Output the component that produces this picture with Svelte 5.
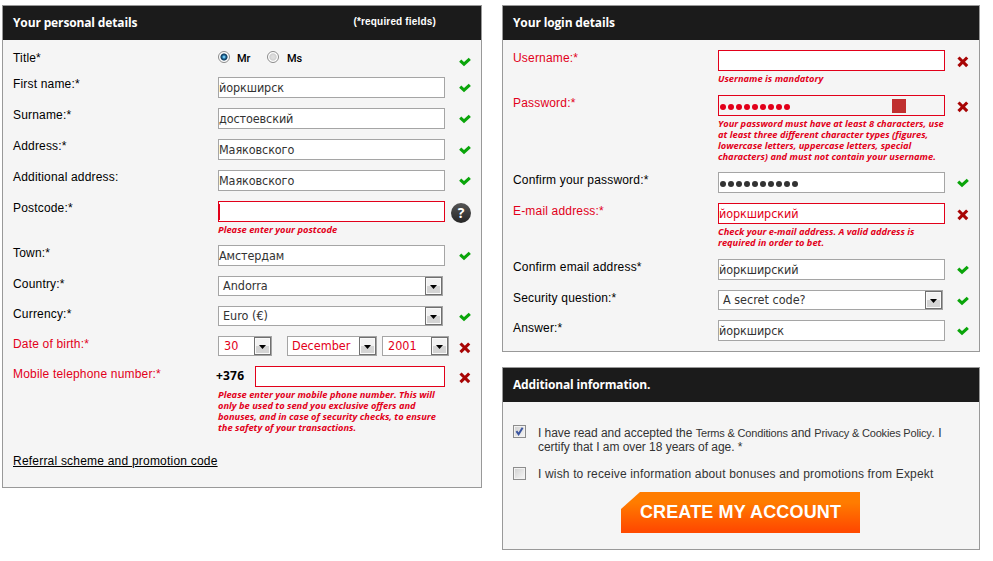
<script>
  const personal = [
    { label: 'First name:*', value: 'йоркширск', state: 'ok', h: 31 },
    { label: 'Surname:*', value: 'достоевский', state: 'ok', h: 31 },
    { label: 'Address:*', value: 'Маяковского', state: 'ok', h: 31 },
    { label: 'Additional address:', value: 'Маяковского', state: 'ok', h: 31 },
    { label: 'Postcode:*', value: '', state: 'help', red: true, caret: true, h: 44, lines: ['Please enter your postcode'] },
    { label: 'Town:*', value: 'Амстердам', state: 'ok', h: 31, low: true },
    { label: 'Country:*', select: 'Andorra', h: 30, low: true },
    { label: 'Currency:*', select: 'Euro (€)', state: 'ok', h: 30, low: true },
    { label: 'Date of birth:*', date: true, bad: true, state: 'bad', h: 30, low: true },
    {
      label: 'Mobile telephone number:*', phone: true, bad: true, red: true, state: 'bad', h: 88, low: true,
      lines: ['Please enter your mobile phone number. This will', 'only be used to send you exclusive offers and', 'bonuses, and in case of security checks, to ensure', 'the safety of your transactions.']
    }
  ];
  const login = [
    { label: 'Username:*', value: '', bad: true, red: true, state: 'bad', h: 45, low: true, lines: ['Username is mandatory'] },
    {
      label: 'Password:*', dots: 9, bad: true, red: true, state: 'bad', h: 77, low: true, grey: true,
      lines: ['Your password must have at least 8 characters, use', 'at least three different character types (figures,', 'lowercase letters, uppercase letters, special', 'characters) and must not contain your username.']
    },
    { label: 'Confirm your password:*', dots: 10, state: 'ok', h: 31, low: true },
    { label: 'E-mail address:*', value: 'йоркширский', bad: true, red: true, state: 'bad', h: 56, low: true, lines: ['Check your e-mail address. A valid address is', 'required in order to bet.'] },
    { label: 'Confirm email address*', value: 'йоркширский', state: 'ok', h: 31, low: true },
    { label: 'Security question:*', select: 'A secret code?', state: 'ok', h: 30, low: true },
    { label: 'Answer:*', value: 'йоркширск', state: 'ok', h: 31, low: true }
  ];
</script>

{#snippet icon(state)}
  {#if state === 'ok'}
    <svg class="icon" width="12" height="10" viewBox="0 0 12 10"><path d="M1.2 3.7 L5 7.2 L10.8 1.8" fill="none" stroke="#0aa50a" stroke-width="3.1" /></svg>
  {:else if state === 'bad'}
    <svg class="icon" width="12" height="12" viewBox="0 0 12 12"><path d="M1.5 1.5 L10.2 10.2 M10.2 1.5 L1.5 10.2" fill="none" stroke="#a80505" stroke-width="3.1" /></svg>
  {:else if state === 'help'}
    <span class="help">?</span>
  {/if}
{/snippet}

{#snippet select(text, size)}
  <span class="select {size}"><span class="chosen">{text}</span><span class="drop"><svg width="7" height="4" viewBox="0 0 7 4"><path d="M0 0H7L3.5 4Z" fill="#000" /></svg></span></span>
{/snippet}

{#snippet row(f)}
  <div class="row" class:bad={f.bad} style="height:{f.h}px">
    <span class="label" class:low={f.low}>{f.label}</span>
    <div class="field">
      {#if f.select}
        {@render select(f.select, 'wide')}
      {:else if f.date}
        <div class="date">
          {@render select('30', 'day')}
          {@render select('December', 'month')}
          {@render select('2001', 'year')}
        </div>
      {:else if f.phone}
        <div class="phone"><b>+376</b><span class="input red"></span></div>
      {:else}
        <div class="input" class:red={f.red} class:grey={f.grey}>
          {#if f.dots}
            <span class="dots">{#each Array(f.dots) as _}<i></i>{/each}</span>
            {#if f.grey}<span class="block"></span>{/if}
          {:else}
            {#if f.caret}<span class="caret"></span>{/if}<span>{f.value}</span>
          {/if}
        </div>
      {/if}
      {#if f.lines}
        <div class="error">{#each f.lines as l}{l}<br />{/each}</div>
      {/if}
    </div>
    <div class="status" class:ask={f.state === 'help'}>{@render icon(f.state)}</div>
  </div>
{/snippet}

<main>
  <section class="panel left">
    <header><h2>Your personal details</h2><small>(*required fields)</small></header>
    <div class="row title">
      <span class="label">Title*</span>
      <div class="field radios">
        <span class="radio on"></span><span class="opt">Mr</span>
        <span class="radio second"></span><span class="opt">Ms</span>
      </div>
      <div class="status">{@render icon('ok')}</div>
    </div>
    {#each personal as f}{@render row(f)}{/each}
    <span class="referral">Referral scheme and promotion code</span>
  </section>

  <div class="column">
    <section class="panel login">
      <header><h2>Your login details</h2></header>
      <div class="rows">
        {#each login as f}{@render row(f)}{/each}
      </div>
    </section>

    <section class="panel extra">
      <header><h2 class="h-extra">Additional information.</h2></header>
      <div class="agree">
        <span class="check"><svg width="11" height="11" viewBox="0 0 11 11"><path d="M2.4 5.2 L4.6 8.2 L8.6 1.8" fill="none" stroke="#3c56a0" stroke-width="2" /></svg></span>
        <p>I have read and accepted the <em>Terms &amp; Conditions</em> and <em>Privacy &amp; Cookies Policy</em>. I<br />certify that I am over 18 years of age. *</p>
      </div>
      <div class="agree news">
        <span class="check"></span>
        <p>I wish to receive information about bonuses and promotions from Expekt</p>
      </div>
      <button type="button">CREATE MY ACCOUNT</button>
    </section>
  </div>
</main>

<style>
  :global(body) { margin: 0; background: #fff; }
  main {
    display: flex; gap: 20px; align-items: flex-start; box-sizing: border-box;
    width: 993px; height: 561px; padding: 5px 0 0 2px; overflow: hidden;
    font: 12px/14px "Liberation Sans", Arial, sans-serif; color: #000;
  }
  .panel { box-sizing: border-box; background: #f5f5f5; border: 1px solid #999; }
  .left { width: 480px; height: 483px; }
  .column { display: flex; flex-direction: column; gap: 15px; width: 478px; }
  .login { height: 347px; }
  .extra { height: 183px; }
  header {
    display: flex; align-items: center; height: 34px; padding: 0 45px 0 10px;
    justify-content: space-between; background: #1b1b1b; color: #fff;
  }
  h2 { margin: 0; font: bold 12px/16px "Open Sans", "Noto Sans", sans-serif; letter-spacing: -.14px; white-space: nowrap; }
  .h-extra { letter-spacing: -.17px; }
  small { font: bold 10px/14px "Liberation Sans", Arial, sans-serif; letter-spacing: .17px; padding-bottom: 3px; }
  .row { display: flex; padding-left: 10px; }
  .title { height: 26px; margin-top: 11px; }
  .rows { padding-top: 10px; }
  .label { box-sizing: border-box; width: 205px; flex: none; white-space: nowrap; letter-spacing: .18px; }
  .low { padding-top: 1px; }
  .bad .label { color: #e2001a; }
  .field { width: 227px; flex: none; }
  .input {
    display: flex; align-items: center; box-sizing: border-box; height: 21px;
    border: 1px solid #a5a5a5; background: #fff; color: #333; white-space: nowrap;
    font: 12.5px/19px "DejaVu Sans Condensed", "DejaVu Sans", sans-serif; letter-spacing: -.1px;
  }
  .input.red { border-color: #e2001a; }
  .bad .input, .bad .select { color: #e2001a; }
  .input.grey { background: #f5f5f5; }
  .caret { width: 1px; height: 16px; background: #e2001a; }
  .dots { display: flex; gap: 2px; padding: 2px 0 0 1px; }
  .dots i { width: 6px; height: 6px; border-radius: 50%; background: currentColor; }
  .block { width: 14px; height: 14px; margin-left: 102px; background: #c03030; }
  .error {
    padding-top: 2px; color: #e2001a; white-space: nowrap;
    font: italic bold 9.3px/11px "Open Sans", "Noto Sans", sans-serif;
  }
  .select {
    display: flex; align-items: center; justify-content: space-between; box-sizing: border-box;
    height: 20px; padding: 0 0 0 4px; border: 1px solid #a5a5a5; background: #fff; color: #333;
    font: 12.5px/18px "DejaVu Sans Condensed", "DejaVu Sans", sans-serif;
  }
  .wide { width: 225px; }
  .day { width: 54px; padding-left: 5px; }
  .month { width: 90px; margin-left: 15px; }
  .year { width: 67px; margin-left: 5px; padding-left: 5px; }
  .drop {
    display: flex; align-items: center; justify-content: center; box-sizing: border-box;
    width: 17px; height: 18px; padding-top: 2px; border: 1px solid #707070;
    background: linear-gradient(#f2f2f2 50%, #d4d4d4 50%); box-shadow: inset 0 0 0 1px #fafafa;
  }
  .date { display: flex; width: 231px; }
  .phone { display: flex; margin-left: -2px; }
  .phone b { width: 39px; font: bold 12px/20px "Open Sans", sans-serif; letter-spacing: .2px; }
  .phone .input { width: 190px; }
  .status { width: 12px; padding: 6px 0 0 14px; }
  .status.ask { width: 20px; padding: 2px 0 0 6px; }
  .login .status { padding-left: 12px; }
  .icon { display: block; }
  .help {
    display: block; width: 20px; height: 20px; border-radius: 50%; text-align: center;
    background: linear-gradient(#555, #262626); color: #fff; font: bold 14px/20px "Open Sans", sans-serif;
  }
  .radios { display: flex; }
  .radio {
    box-sizing: border-box; width: 12px; height: 12px; border: 1px solid #8b8b8b; border-radius: 50%;
    background: radial-gradient(circle at 50% 50%, #ddd 20%, #cfcfcf 45%, #fff 60%);
  }
  .radio.on { background: radial-gradient(circle at 50% 50%, #6cc6f0 0 10%, #1b5f8d 28%, #123c5c 44%, #fff 56%); }
  .second { margin-left: 17px; }
  .opt { margin-left: 7px; font: 500 11px/16px Roboto, sans-serif; }
  .radio.second + .opt { margin-left: 8px; }
  .radio.on + .opt { width: 13px; }
  .referral { margin-left: 10px; text-decoration: underline; letter-spacing: .21px; }
  .agree { display: flex; padding: 23px 0 0 10px; color: #333; }
  .news { padding-top: 13px; }
  .check {
    box-sizing: border-box; width: 13px; height: 13px; border: 1px solid #8c8c8c; margin-right: 12px;
    background: linear-gradient(135deg, #cfcfcf, #f7f7f7); box-shadow: inset 0 0 0 1px #f2f2f2;
  }
  .check svg { display: block; }
  p { margin: 1px 0 0; white-space: nowrap; letter-spacing: -.04px; }
  .news p { margin-top: 0; letter-spacing: .16px; }
  em { font-style: normal; font-size: 11px; letter-spacing: -.18px; }
  button {
    display: block; width: 239px; height: 41px; margin: 11px 0 0 118px; padding: 0; border: 0;
    clip-path: polygon(19px 0, 100% 0, 100% 100%, 0 100%, 0 17px);
    background: linear-gradient(#ff7c00 25%, #ff4b00 92%); color: #fff;
    font: bold 18px/41px "Liberation Sans", Arial, sans-serif; letter-spacing: .15px;
  }
</style>
